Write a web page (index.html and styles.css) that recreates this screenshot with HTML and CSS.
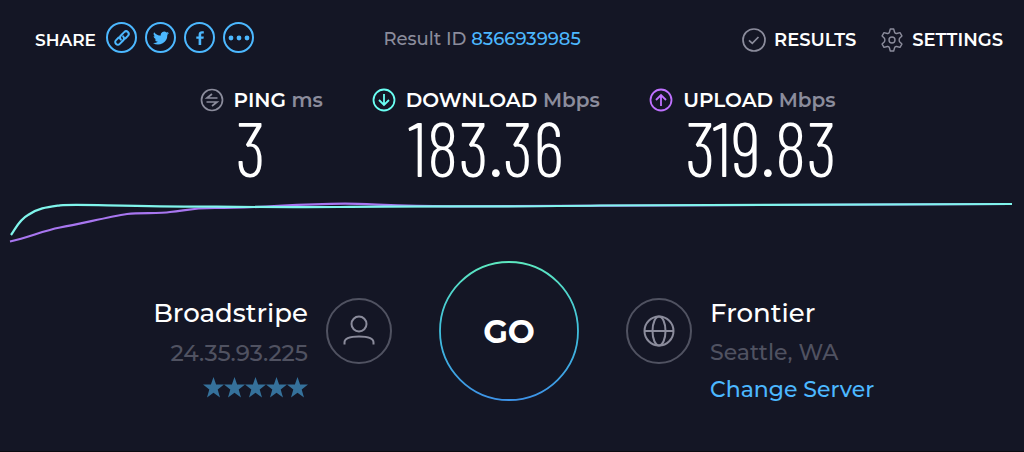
FILE: index.html
```html
<!DOCTYPE html>
<html lang="en">
<head>
  <meta charset="UTF-8">
  <meta name="viewport" content="width=device-width, initial-scale=1.0">
  <title>Speed test result</title>
  <link rel="stylesheet" href="styles.css">
</head>
<body>
<main class="page">

  <header class="topbar">
    <div class="share">
      <span class="share-label">SHARE</span>
      <a class="share-link" href="#link" aria-label="Copy link">
        <svg width="20" height="20" viewBox="0 0 18 18" fill="none" stroke="currentColor" stroke-width="1.800" stroke-linecap="round">
          <path d="M8 10.500C6.600 9 7 7.700 8 6.700L11 3.700C12.100 2.600 13.300 2.600 14.300 3.600C15.400 4.700 15.400 6 14.300 7.100L12 9.400"/>
          <path d="M10 7.500C11.400 9 11 10.300 10 11.300L7 14.300C5.900 15.400 4.700 15.400 3.700 14.400C2.600 13.300 2.600 12 3.700 10.900L6 8.600"/>
        </svg>
      </a>
      <a class="share-link" href="#twitter" aria-label="Share on Twitter">
        <svg width="16" height="16" viewBox="0 0 24 24" fill="currentColor">
          <path d="M24 4.600a10 10 0 0 1-2.800.8 5 5 0 0 0 2.100-2.700 10 10 0 0 1-3.100 1.200 4.900 4.900 0 0 0-8.400 4.500A14 14 0 0 1 1.700 3.200a4.900 4.900 0 0 0 1.500 6.500 5 5 0 0 1-2.200-.6c0 2.400 1.600 4.400 3.900 4.900a5 5 0 0 1-2.200.1 4.900 4.900 0 0 0 4.600 3.400A10 10 0 0 1 0 19.500a14 14 0 0 0 21.500-12.400A10 10 0 0 0 24 4.600z"/>
        </svg>
      </a>
      <a class="share-link" href="#facebook" aria-label="Share on Facebook">
        <svg width="14" height="14" viewBox="0 0 14 14" fill="currentColor">
          <path d="M5.600 14V7.800H3.300V5.400h2.300V3.600C5.600 1.300 7 .2 9 .2c.9 0 1.600.1 1.800.1v2.200H9.500c-1.100 0-1.300.5-1.300 1.300v1.600h2.600l-.3 2.400H8.200V14z"/>
        </svg>
      </a>
      <a class="share-link" href="#more" aria-label="More">
        <svg width="22" height="6" viewBox="0 0 22 6" fill="currentColor">
          <circle cx="3" cy="3" r="2.400"/><circle cx="11" cy="3" r="2.400"/><circle cx="19" cy="3" r="2.400"/>
        </svg>
      </a>
    </div>

    <div class="result-id">Result ID <a href="#result">8366939985</a></div>

    <nav class="menu">
      <a href="#results">
        <svg width="24" height="24" viewBox="0 0 24 24" fill="none" stroke="currentColor" stroke-width="1.700">
          <circle cx="12" cy="12" r="11"/>
          <path d="M7 12.300l3.300 3.100L16.500 9"/>
        </svg>
        RESULTS
      </a>
      <a href="#settings">
        <svg width="24" height="24" viewBox="0 0 24 24" fill="none" stroke="currentColor" stroke-width="1.400" stroke-linejoin="round">
          <path d="M10.300 1h3.400l.9 3.300c.2.700 1.300 1.400 2.100 1.200l3.300-.9 1.900 3.300-2.300 2.300c-.6.700-.6 2.900 0 3.600l2.300 2.300-1.900 3.300-3.300-.9c-.8-.2-1.900.5-2.100 1.200l-.9 3.300h-3.400l-.9-3.300c-.2-.7-1.300-1.400-2.100-1.200l-3.300.9-1.900-3.300 2.300-2.300c.6-.7.6-2.900 0-3.600L2.100 7.900 4 4.600l3.300.9c.8.200 1.900-.5 2.100-1.200z"/>
          <circle cx="12" cy="12" r="3"/>
        </svg>
        SETTINGS
      </a>
    </nav>
  </header>

  <section class="metrics">
    <div class="metric ping">
      <svg width="24" height="24" viewBox="0 0 24 24" fill="none" stroke="currentColor" stroke-width="1.700">
        <circle cx="12" cy="12" r="10.500"/>
        <path d="M17.500 10H7l5-4M6.500 14H17l-5 4"/>
      </svg>
      <h2>PING <small>ms</small></h2>
      <p class="value">3</p>
    </div>
    <div class="metric download">
      <svg width="24" height="24" viewBox="0 0 24 24" fill="none" stroke="currentColor" stroke-width="1.800">
        <circle cx="12" cy="12" r="10.500"/>
        <path d="M12 6v11M7 12l5 5 5-5"/>
      </svg>
      <h2>DOWNLOAD <small>Mbps</small></h2>
      <p class="value">183.36</p>
    </div>
    <div class="metric upload">
      <svg width="24" height="24" viewBox="0 0 24 24" fill="none" stroke="currentColor" stroke-width="1.800">
        <circle cx="12" cy="12" r="10.500"/>
        <path d="M12 18V7M7 12l5-5 5 5"/>
      </svg>
      <h2>UPLOAD <small>Mbps</small></h2>
      <p class="value">319.83</p>
    </div>
  </section>

  <svg class="chart" viewBox="0 0 1024 50" preserveAspectRatio="none" fill="none" stroke-width="2.200">
    <path class="line-up" d="M10 46.500C30 42 42 36 60 32.500C80 29 108 22 127 19C142 17.500 160 19 170 17C186 15.500 190 13 215 13C265 13 290 9 345 8.700C370 9 400 11 450 11.300L1012 9"/>
    <path class="line-down" d="M11 40C16 33 19 25 28 20C38 13 48 12 60 10.300C80 9 110 11 160 11.300C230 11.700 280 12.500 340 12C420 11 500 12 600 10.500L1012 9"/>
  </svg>

  <section class="connection">
    <div class="host provider">
      <div class="host-text">
        <h3>Broadstripe</h3>
        <p class="ip">24.35.93.225</p>
        <svg class="stars" width="105" height="22" viewBox="0 0 105 22" fill="currentColor" role="img" aria-label="5 stars">
          <defs>
            <path id="star" d="M10.500 0l2.600 7.500H21l-6.300 5 2.300 8.100-6.500-4.800L4 20.600l2.300-8.100L0 7.500h7.900z"/>
          </defs>
          <use href="#star"/><use href="#star" x="21"/><use href="#star" x="42"/><use href="#star" x="63"/><use href="#star" x="84"/>
        </svg>
      </div>
      <span class="host-icon">
        <svg width="34" height="34" viewBox="0 0 34 34" fill="none" stroke="currentColor" stroke-width="2">
          <circle cx="17" cy="10" r="7.500"/>
          <path d="M2.500 30.500v-2c0-4 5.500-6 14.500-6s14.500 2 14.500 6v2"/>
        </svg>
      </span>
    </div>

    <button class="go" type="button">
      <svg class="go-ring" viewBox="0 0 140 140" fill="none">
        <defs>
          <linearGradient id="ring" x1="0" y1="0" x2="0" y2="1">
            <stop offset="0" stop-color="#5de8c0"/>
            <stop offset="0.500" stop-color="#40bfdc"/>
            <stop offset="1" stop-color="#3d93e8"/>
          </linearGradient>
        </defs>
        <circle cx="70" cy="70" r="69" stroke="url(#ring)" stroke-width="1.800"/>
      </svg>
      GO
    </button>

    <div class="host server">
      <span class="host-icon">
        <svg width="34" height="34" viewBox="0 0 34 34" fill="none" stroke="currentColor" stroke-width="2">
          <circle cx="17" cy="17" r="14.500"/>
          <ellipse cx="17" cy="17" rx="6.500" ry="14.500"/>
          <path d="M2.500 17h29"/>
        </svg>
      </span>
      <div class="host-text">
        <h3>Frontier</h3>
        <p>Seattle, WA</p>
        <a href="#servers">Change Server</a>
      </div>
    </div>
  </section>

</main>
</body>
</html>
```
FILE: styles.css
```css
* {
  box-sizing: border-box;
}

body {
  margin: 0;
  background-color: #141625;
  color: #fff;
  font-family: Montserrat, Inter, sans-serif;
}

a {
  color: #4cb8ff;
  text-decoration: none;
}

h2, h3, p {
  margin: 0;
}

svg {
  display: block;
}

.page {
  min-height: 100vh;
  padding-top: 22px;
  border-bottom: 1px solid #0b0b12;
}

.topbar {
  display: grid;
  grid-template-columns: 36% 1fr auto;
  align-items: center;
  padding: 0 21px 0 35px;
}

.share {
  display: flex;
  align-items: center;
  gap: 8px;
}

.share-label {
  padding: 4px 2px 0 0;
  font-size: 17px;
  font-weight: 600;
}

.share-link {
  display: flex;
  align-items: center;
  justify-content: center;
  width: 31px;
  height: 31px;
  border: 2px solid #4cb8ff;
  border-radius: 50%;
}

.result-id {
  padding-top: 2px;
  color: #8b8c9c;
  font-size: 18px;
  font-weight: 500;
}

.menu {
  display: flex;
  gap: 24px;
  padding-top: 4px;
}

.menu a {
  display: flex;
  align-items: center;
  gap: 8px;
  color: #fff;
  font-size: 18px;
  font-weight: 600;
}

.menu svg {
  color: #8b8c9c;
}

.metrics {
  display: grid;
  grid-template-columns: 172fr 277fr 180fr;
  width: 62%;
  margin: 35px auto 0;
  padding-left: 5px;
}

.metric {
  display: grid;
  grid-template-columns: 24px auto;
  justify-content: start;
  align-items: center;
  column-gap: 10px;
  min-width: 0;
}

.metric h2 {
  font-size: 20px;
  line-height: 24px;
  font-weight: 600;
  white-space: nowrap;
}

.metric small {
  color: #8b8c9c;
  font-size: 20px;
}

.metric .value {
  grid-column: 2;
  padding-left: 2px;
  font-family: "Barlow Condensed", "Roboto Condensed", Roboto, sans-serif;
  font-size: 76px;
  font-weight: 300;
  line-height: 70px;
}

.ping svg {
  color: #8b8c9c;
}

.download svg {
  color: #6afff3;
}

.upload svg {
  color: #bf71ff;
}

.chart {
  width: 100%;
  height: 50px;
  margin-top: 13px;
}

.line-up {
  stroke: #a876f0;
}

.line-down {
  stroke: #80f5ec;
}

.connection {
  display: grid;
  grid-template-columns: 1fr 140px 1fr;
  column-gap: 47px;
  margin-top: 16px;
  padding-right: 6px;
}

.host {
  display: flex;
  gap: 18px;
  margin-top: 37px;
}

.provider {
  justify-content: flex-end;
  text-align: right;
}

.host-text {
  display: flex;
  flex-direction: column;
  margin-top: -5px;
}

.host-icon {
  display: flex;
  align-items: center;
  justify-content: center;
  width: 66px;
  height: 66px;
  border: 2px solid #505261;
  border-radius: 50%;
  color: #8b8c9c;
}

.host h3 {
  font-size: 26px;
  line-height: 40px;
  font-weight: 500;
}

.host p {
  color: #505261;
  font-size: 22px;
  font-weight: 500;
  line-height: 40px;
}

.host .ip {
  font-size: 23px;
}

.host a {
  font-size: 22px;
  font-weight: 500;
  line-height: 34px;
}

.stars {
  align-self: flex-end;
  margin: 4px 0;
  color: #35719b;
}

.go {
  position: relative;
  height: 140px;
  padding: 0;
  border: none;
  border-radius: 50%;
  background: none;
  color: #fff;
  font-family: inherit;
  font-size: 32px;
  font-weight: 700;
}

.go-ring {
  position: absolute;
  inset: 0;
}
```
